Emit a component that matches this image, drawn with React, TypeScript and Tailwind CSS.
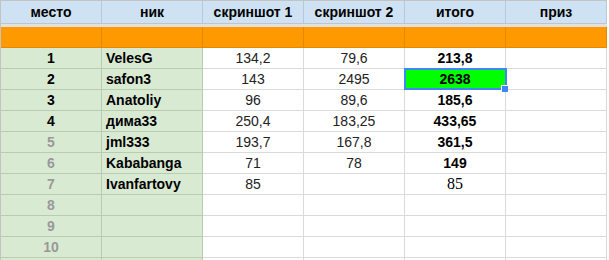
import React from "react"

interface Row {
    place: number
    nick: string
    s1: string
    s2: string
    total: string
}

const rows: Row[] = [
    { place: 1, nick: "VelesG", s1: "134,2", s2: "79,6", total: "213,8" },
    { place: 2, nick: "safon3", s1: "143", s2: "2495", total: "2638" },
    { place: 3, nick: "Anatoliy", s1: "96", s2: "89,6", total: "185,6" },
    { place: 4, nick: "дима33", s1: "250,4", s2: "183,25", total: "433,65" },
    { place: 5, nick: "jml333", s1: "193,7", s2: "167,8", total: "361,5" },
    { place: 6, nick: "Kababanga", s1: "71", s2: "78", total: "149" },
    { place: 7, nick: "Ivanfartovy", s1: "85", s2: "", total: "85" },
    { place: 8, nick: "", s1: "", s2: "", total: "" },
    { place: 9, nick: "", s1: "", s2: "", total: "" },
    { place: 10, nick: "", s1: "", s2: "", total: "" },
    { place: 11, nick: "", s1: "", s2: "", total: "" },
]

const headers = ["место", "ник", "скриншот 1", "скриншот 2", "итого", "приз"]

const greenCell = "h-[21px] border-r border-b border-[#b9ccb2] bg-[#d9ead3] flex items-center"
const cellBase = "h-[21px] border-r border-b border-[#dadada] flex items-center justify-center"

const totalClass = (place: number) => {
    if (place === 2) return `${cellBase} bg-[#00ff00] font-bold`
    if (place === 7) return `${cellBase} bg-white font-['Liberation_Serif','Times_New_Roman',serif] text-[16px]`
    return `${cellBase} bg-white font-bold`
}

const App: React.FC = () => {
    return (
        <div className="w-[609px] h-[260px] overflow-hidden bg-white text-[14px] leading-none text-black font-['Liberation_Sans',Arial,sans-serif]">
            <div className="relative w-[607px] border-t border-l border-[#c3c3c3] grid grid-cols-[repeat(6,101px)]">

                {/* header */}
                {headers.map((h) => (
                    <div
                        key={h}
                        className="h-[23px] border-r border-b border-r-[#b8c8d6] border-b-[#c4c4c4] bg-[#cfe2f3] flex items-center justify-center font-bold"
                    >
                        {h}
                    </div>
                ))}

                {/* frozen row divider */}
                <div className="col-span-6 h-[3px] bg-[#e1e1e1]" />

                {/* orange row */}
                {headers.map((h) => (
                    <div key={"o" + h} className="h-[21px] border-r border-b border-[#e38a00] bg-[#ff9900]" />
                ))}

                {rows.map((r) => (
                    <React.Fragment key={r.place}>
                        <div className={`${greenCell} justify-center font-bold ${r.place > 4 ? "text-[#999999]" : "text-black"}`}>
                            {r.place < 11 ? r.place : ""}
                        </div>
                        <div className={`${greenCell} pl-[4px] font-bold`}>{r.nick}</div>
                        <div className={`${cellBase} bg-white text-[#222222]`}>{r.s1}</div>
                        <div className={`${cellBase} bg-white text-[#222222]`}>{r.s2}</div>
                        <div className={totalClass(r.place)}>{r.total}</div>
                        <div className={`${cellBase} bg-white`} />
                    </React.Fragment>
                ))}

                {/* selection around the green total */}
                <div className="absolute left-[403px] top-[67px] w-[103px] h-[22px] border-2 border-[#4285f4] pointer-events-none" />
                <div className="absolute left-[500px] top-[84px] w-[7px] h-[7px] bg-[#4285f4] border-l border-t border-white" />
            </div>
        </div>
    )
}

export default App
